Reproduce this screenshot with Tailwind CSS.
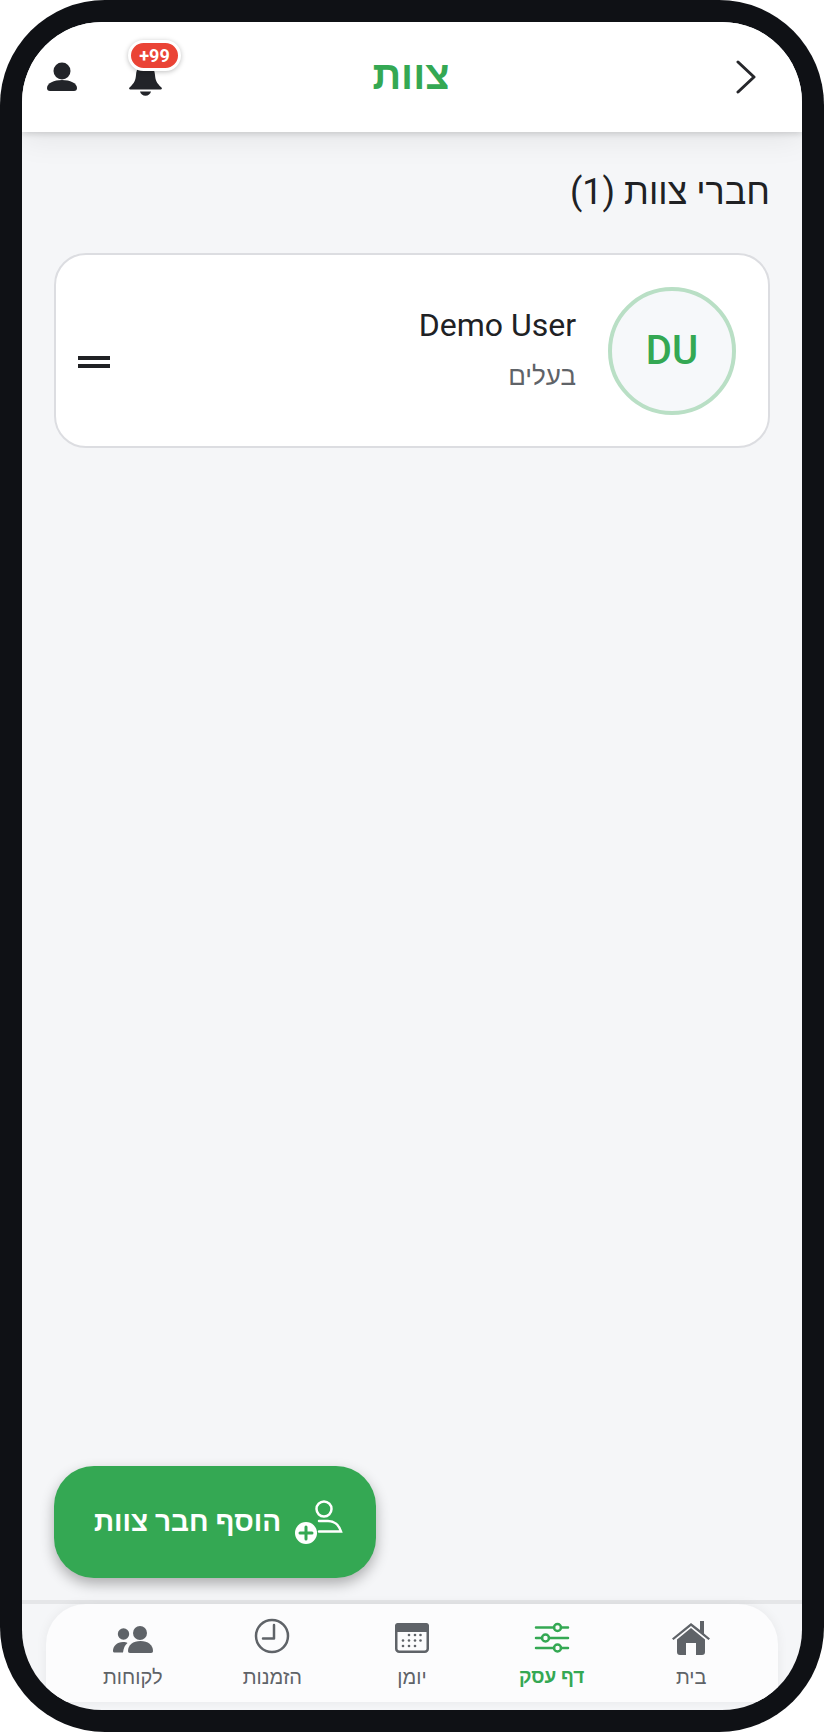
<!DOCTYPE html>
<html lang="he" dir="rtl">
<head>
    <meta charset="UTF-8">
    <meta name="viewport" content="width=device-width, initial-scale=1.0">
    <title>צוות</title>
    <script src="https://cdn.jsdelivr.net/npm/@tailwindcss/browser@4"></script>
</head>
<body class="bg-white font-['Roboto','Noto_Sans',sans-serif]">
    <!-- Phone frame -->
    <div class="w-[824px] h-[1732px] bg-[#0f1115] rounded-[105px] p-[22px]">
        <div class="relative w-full h-full bg-[#f5f6f8] rounded-[80px] overflow-hidden flex flex-col">

            <!-- Header -->
            <header class="h-[110px] shrink-0 bg-white shadow-[0_2px_6px_rgba(0,0,0,0.14),0_6px_30px_rgba(0,0,0,0.08)] z-10 grid grid-cols-[1fr_auto_1fr] items-center pr-[45px] pl-[25px]">
                <div class="flex justify-start">
                    <svg class="w-[22px] h-[34px]" viewBox="0 0 22 34" fill="none" stroke="#26272b" stroke-width="3" stroke-linecap="round" stroke-linejoin="round"><path d="M3 2l16 15L3 32"/></svg>
                </div>
                <h1 class="text-[40px] leading-none font-bold text-[#34a853] -mt-[2px] pl-[18px]">צוות</h1>
                <div class="flex justify-end items-center gap-[51px]">
                    <div class="relative w-[35px] h-[34px] mt-[4px]">
                        <!-- Bell -->
                        <svg class="w-[35px] h-[34px]" viewBox="0 0 35 34" fill="#222429"><path d="M17.5 2C24 2 26.500 7 27 13c.4 5 1.500 8 6.500 12.500.800.800.400 2-.800 2H2.300c-1.200 0-1.600-1.200-.800-2C6.500 21 7.600 18 8 13 8.500 7 11 2 17.500 2z"/><path d="M12 29.500h11c-.6 2.600-2.800 4.300-5.500 4.300s-4.900-1.700-5.500-4.300z"/></svg>
                        <span class="absolute -top-[22px] left-0 w-[53px] h-[31px] rounded-full bg-[#ea4335] border-[3px] border-white shadow-[0_1px_5px_rgba(0,0,0,0.25)] flex items-center justify-center text-white text-[18px] font-bold leading-none" dir="ltr">+99</span>
                    </div>
                    <svg class="w-[30px] h-[30px]" viewBox="0 0 30 30" fill="#222429"><circle cx="15" cy="9" r="8.500"/><path d="M0 26c0-5 7-8 15-8s15 3 15 8c0 2-1 3-3 3H3c-2 0-3-1-3-3z"/></svg>
                </div>
            </header>

            <!-- Content -->
            <main class="flex-1 pt-[38px] px-[32px]">
                <h2 class="text-[36px] leading-[44px] text-[#202124]">חברי צוות (1)</h2>
                <div class="mt-[39px] h-[195px] bg-white border-2 border-[#dcdde1] rounded-[32px] flex items-center pr-[32px] pl-[22px]">
                    <div class="w-[128px] h-[128px] shrink-0 rounded-full border-4 border-[#b9dfc5] bg-[#f6f8fa] flex items-center justify-center text-[40px] font-medium text-[#34a853]" dir="ltr">DU</div>
                    <div class="flex-1 mr-[32px]">
                        <div class="text-[32px] leading-[40px] text-[#202124] -mt-[5px]">Demo User</div>
                        <div class="mt-[15px] text-[26px] leading-[32px] text-[#5f6368]">בעלים</div>
                    </div>
                    <div class="w-[32px] flex flex-col gap-[4px] mt-[22px]">
                        <span class="block h-[4px] bg-[#202124]"></span>
                        <span class="block h-[4px] bg-[#202124]"></span>
                    </div>
                </div>
            </main>

            <!-- Add member button -->
            <button class="absolute left-[32px] bottom-[132px] w-[322px] h-[112px] pl-[7px] rounded-[40px] bg-[#34a853] shadow-[0_6px_14px_rgba(0,0,0,0.3)] flex items-center justify-center gap-[14px] text-white text-[28px] font-bold">
                <svg class="w-[48px] h-[46px] mt-[2px]" viewBox="0 0 48 46" fill="none" stroke="#fff" stroke-width="2.500" stroke-linecap="round"><circle cx="29" cy="9" r="7.500"/><path d="M24 21h9c6 0 11 4 13 10.500H24"/><circle cx="11" cy="33" r="11" fill="#fff" stroke="none"/><path d="M5 33h12M11 27v12" stroke="#34a853" stroke-width="3"/></svg>
                <span>הוסף חבר צוות</span>
            </button>

            <!-- Bottom nav -->
            <nav class="h-[110px] shrink-0 border-t-4 border-[#e5e6e8] px-[24px] pb-[8px]">
                <div class="h-full bg-[#fcfcfd] rounded-t-[40px] rounded-b-none grid grid-cols-5 px-[17px] pt-[14px] shadow-[0_0_12px_rgba(0,0,0,0.06)]">
                    <div class="flex flex-col items-center text-[#5f6368]">
                        <svg class="w-[40px] h-[38px]" viewBox="0 0 40 38" fill="#5f6368"><path d="M20 5L1 20.500l1.500 1.500L20 8l17.500 14 1.500-1.500L33 15.500V3h-4v9z"/><path d="M6 21.500L20 10l14 11.500V34c0 2-1 3-3 3h-6V25h-10v12H9c-2 0-3-1-3-3z"/></svg>
                        <span class="mt-[9px] text-[20px] leading-[24px]">בית</span>
                    </div>
                    <div class="flex flex-col items-center text-[#34a853]">
                        <svg class="w-[36px] h-[38px]" viewBox="0 0 36 38" fill="none" stroke="#34a853" stroke-width="2.500" stroke-linecap="round"><path d="M2 9.500h18M27 9.500h7M2 20h6M15 20h19M2 30h18M27 30h7"/><circle cx="23.500" cy="9.500" r="3.500"/><circle cx="11.500" cy="20" r="3.500"/><circle cx="23.500" cy="30" r="3.500"/></svg>
                        <span class="mt-[9px] text-[19px] leading-[24px] font-bold">דף עסק</span>
                    </div>
                    <div class="flex flex-col items-center text-[#5f6368]">
                        <svg class="w-[34px] h-[38px]" viewBox="0 0 34 38" fill="#5f6368"><rect x="1.250" y="6.250" width="31.500" height="27.500" rx="3" fill="none" stroke="#5f6368" stroke-width="2.500"/><path d="M0 8c0-2 1-3 3-3h28c2 0 3 1 3 3v6H0z"/><circle cx="14" cy="17" r="1.300"/><circle cx="20" cy="17" r="1.300"/><circle cx="25.500" cy="17" r="1.300"/><circle cx="8" cy="22.500" r="1.300"/><circle cx="14" cy="22.500" r="1.300"/><circle cx="20" cy="22.500" r="1.300"/><circle cx="25.500" cy="22.500" r="1.300"/><circle cx="8" cy="28" r="1.300"/><circle cx="14" cy="28" r="1.300"/><circle cx="20" cy="28" r="1.300"/></svg>
                        <span class="mt-[9px] text-[20px] leading-[24px]">יומן</span>
                    </div>
                    <div class="flex flex-col items-center text-[#5f6368]">
                        <svg class="w-[36px] h-[38px]" viewBox="0 0 36 38" fill="none" stroke="#5f6368" stroke-width="2.500" stroke-linecap="round" stroke-linejoin="round"><circle cx="18" cy="18" r="16"/><path d="M9 20.500h11V7"/></svg>
                        <span class="mt-[9px] text-[20px] leading-[24px]">הזמנות</span>
                    </div>
                    <div class="flex flex-col items-center text-[#5f6368]">
                        <svg class="w-[42px] h-[38px]" viewBox="0 0 42 38" fill="#5f6368"><circle cx="28" cy="15" r="7"/><circle cx="11.500" cy="16" r="5.700"/><path d="M16 33c0-6 5-10 12.500-10S41 27 41 33c0 1.200-.6 2-2 2H18c-1.400 0-2-.8-2-2z"/><path d="M1 33c0-5 4-9 10-9 2 0 3.500.4 4.500 1-2.500 2-4 5-4.500 9.500H3c-1.300 0-2-.5-2-1.500z"/></svg>
                        <span class="mt-[9px] text-[20px] leading-[24px]">לקוחות</span>
                    </div>
                </div>
            </nav>
        </div>
    </div>
</body>
</html>
